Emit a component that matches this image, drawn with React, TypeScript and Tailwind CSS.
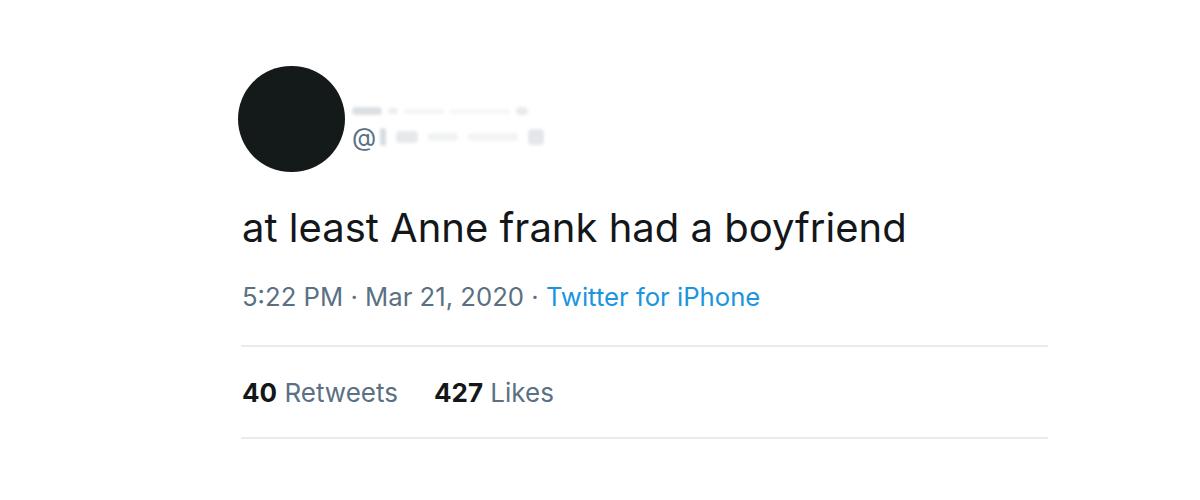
import React from "react";

export default function App() {
  return (
    <div className="w-[1200px] h-[500px] bg-white overflow-hidden" style={{ fontFamily: 'Inter, "Liberation Sans", Arial, sans-serif' }}>
      <div className="pl-[238px] pt-[66px] w-[1048px]">
        <div className="flex items-center gap-[7px]">
          <div className="w-[107px] h-[106px] rounded-full bg-[#141a1a]" />
          <div className="flex flex-col pt-[14px]">
            <div className="h-[22px] flex items-center gap-[6px] blur-[1.5px]">
              <span className="w-[30px] h-[8px] bg-[#dcdfe2] rounded" />
              <span className="w-[10px] h-[6px] bg-[#eceef0] rounded" />
              <span className="w-[40px] h-[5px] bg-[#f3f4f5] rounded" />
              <span className="w-[60px] h-[5px] bg-[#f5f6f7] rounded" />
              <span className="w-[12px] h-[8px] bg-[#e8eaec] rounded" />
            </div>
            <div className="flex items-center h-[30px]">
              <span className="text-[25px] text-[#5b7083] leading-none">@</span>
              <div className="flex items-center gap-[10px] ml-[4px] blur-[1.5px]">
                <span className="w-[6px] h-[18px] bg-[#d8dce0] rounded" />
                <span className="w-[22px] h-[12px] bg-[#e6e9ec] rounded" />
                <span className="w-[30px] h-[8px] bg-[#f0f2f3] rounded" />
                <span className="w-[50px] h-[8px] bg-[#f3f4f5] rounded" />
                <span className="w-[16px] h-[16px] bg-[#e4e7ea] rounded" />
              </div>
            </div>
          </div>
        </div>
        <div className="mt-[32px] pl-[4px] text-[40px] leading-[48px] text-[#14171a]">
          at least Anne frank had a boyfriend
        </div>
        <div className="mt-[29px] pl-[4px] text-[25.7px] leading-[32px] text-[#5b7083]">
          5:22 PM · Mar 21, 2020 · <span className="text-[#1b95e0]">Twitter for iPhone</span>
        </div>
        <div className="mt-[32px] ml-[3px] h-[2px] bg-[#e6ecf0]" />
        <div className="pl-[4px] h-[90px] flex items-center gap-[36px] text-[26px] text-[#5b7083]">
          <span><b className="text-[#14171a]">40</b> Retweets</span>
          <span><b className="text-[#14171a]">427</b> Likes</span>
        </div>
        <div className="ml-[3px] h-[2px] bg-[#e6ecf0]" />
      </div>
    </div>
  );
}
